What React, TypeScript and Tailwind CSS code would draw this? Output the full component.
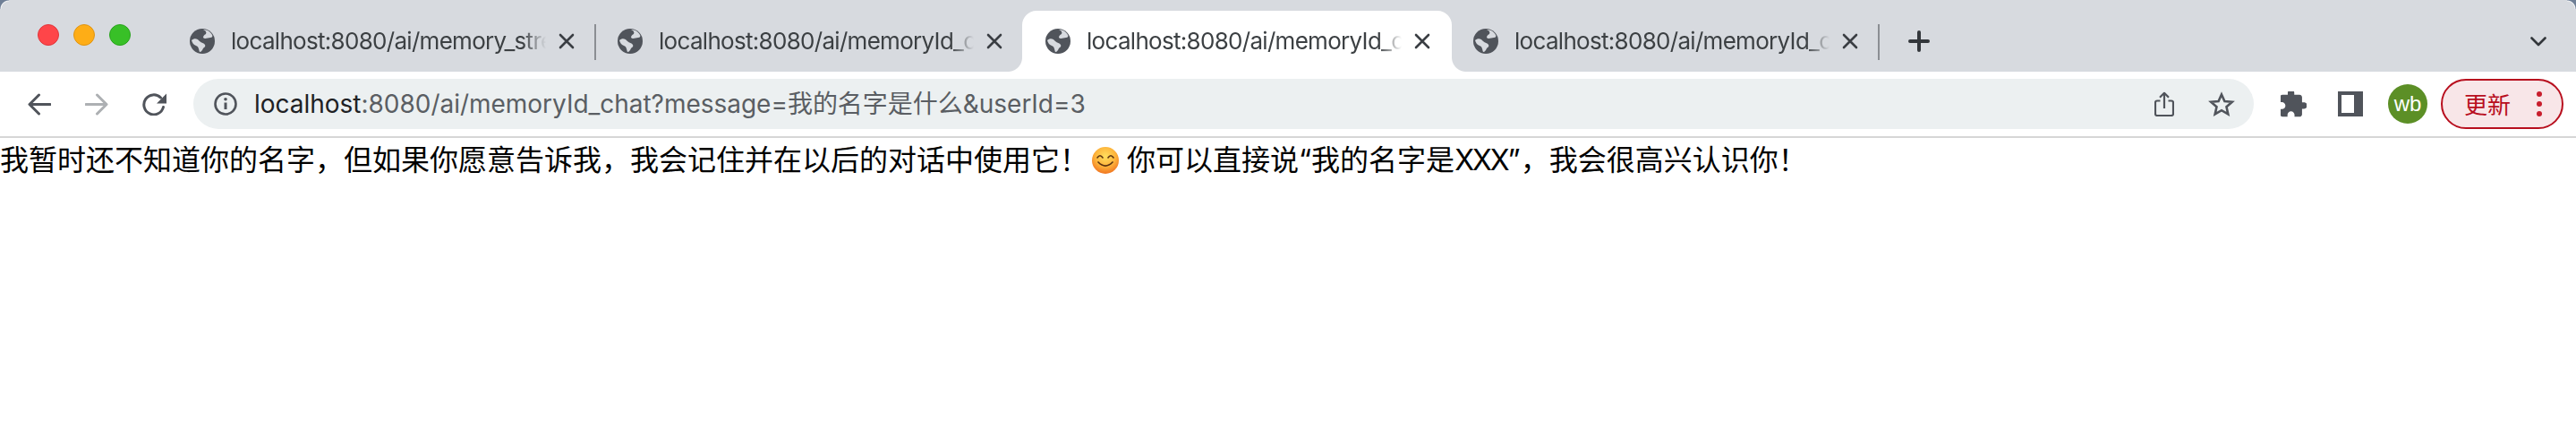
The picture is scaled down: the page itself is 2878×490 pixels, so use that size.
const STRIP = "#d7dadf";

function Globe() {
  return (
    <svg viewBox="0 0 28 28" className="w-[28px] h-[28px] shrink-0">
      <circle cx="14" cy="14" r="14" fill="#50545b" />
      <path
        d="M15 1 C18 2 19 4 18 6 C16 7 15 8 15 10 C17 12 20 10 23 10 C25 10 26 8 25 7 C23 3 19 1 15 1 Z"
        fill={STRIP}
      />
      <path
        d="M2 13 C5 10 9 11 11 14 C13 16 16 16 17 18 C18 20 16 21 15 22 C14 24 13 26 11 26 C10 23 10 20 7 19 C4 18 3 16 2 13 Z"
        fill={STRIP}
      />
    </svg>
  );
}

function Close() {
  return (
    <svg viewBox="0 0 18 18" className="w-[18px] h-[18px] shrink-0">
      <path d="M2 2 L16 16 M16 2 L2 16" stroke="#3a3e43" strokeWidth="2.6" strokeLinecap="round" />
    </svg>
  );
}

function Tab({ title, active, separator }: { title: string; active?: boolean; separator?: boolean }) {
  return (
    <div className={active ? "relative h-[68px] w-[480px] -mr-[2px] flex items-center pl-[26px] bg-white rounded-t-[16px] z-10" : "relative h-[68px] w-[478px] flex items-center pl-[26px]"}>
      {separator && <span className="absolute left-0 top-[15px] w-[2px] h-[40px] bg-[#8b8e93]" />}
      {active && (
        <>
          <span className="absolute left-[-16px] bottom-0 w-[16px] h-[16px] bg-[radial-gradient(circle_at_0_0,#d7dadf_15.5px,#ffffff_16.5px)]" />
          <span className="absolute right-[-16px] bottom-0 w-[16px] h-[16px] bg-[radial-gradient(circle_at_100%_0,#d7dadf_15.5px,#ffffff_16.5px)]" />
        </>
      )}
      <Globe />
      <div className="ml-[18px] w-[352px] overflow-hidden whitespace-nowrap text-[26px] leading-[34px] text-[#3c4043] font-['Inter',sans-serif] tracking-[-0.7px] [mask-image:linear-gradient(to_right,black_326px,transparent_352px)]">
        {title}
      </div>
      <div className="ml-[14px]">
        <Close />
      </div>
    </div>
  );
}

function Emoji() {
  return (
    <svg viewBox="0 0 30 30" className="inline-block w-[30px] h-[30px] align-[-4px] ml-[4px] mr-[9px]">
      <defs>
        <radialGradient id="face" cx="50%" cy="35%" r="70%">
          <stop offset="0%" stopColor="#ffdf5e" />
          <stop offset="55%" stopColor="#fdb23a" />
          <stop offset="100%" stopColor="#ee6a1c" />
        </radialGradient>
      </defs>
      <circle cx="15" cy="15" r="15" fill="url(#face)" />
      <path d="M6 12 Q9 7.5 12 12 M18 12 Q21 7.5 24 12" fill="none" stroke="#5b3210" strokeWidth="1.6" strokeLinecap="round" />
      <path d="M7 17 Q15 25 23 17" fill="none" stroke="#5b3210" strokeWidth="1.7" strokeLinecap="round" />
    </svg>
  );
}

function ToolBtn({ children }: { children: React.ReactNode }) {
  return <div className="w-[64px] h-[56px] flex items-center justify-center shrink-0">{children}</div>;
}

export default function App() {
  return (
    <div className="relative w-full h-[490px] bg-white overflow-hidden font-['Inter','Noto_Sans_CJK_SC',sans-serif]">
      <span className="absolute left-0 top-0 w-[10px] h-[10px] bg-[radial-gradient(circle_at_100%_100%,transparent_8px,#f4f5f6_9px,#6f7f96_10px)]" />
      <span className="absolute right-0 top-0 w-[10px] h-[10px] bg-[radial-gradient(circle_at_0_100%,transparent_8px,#f4f5f6_9px,#6f7f96_10px)]" />

      <div className="h-[80px] bg-[#d7dadf] flex items-end">
        <div className="self-start mt-[27px] ml-[42px] mr-[40px] flex gap-[16px] shrink-0">
          <span className="w-[24px] h-[24px] rounded-full bg-[#fe4549] border border-[#e0363b]" />
          <span className="w-[24px] h-[24px] rounded-full bg-[#fead16] border border-[#df9412]" />
          <span className="w-[24px] h-[24px] rounded-full bg-[#38c027] border border-[#2aa31e]" />
        </div>
        <Tab title="localhost:8080/ai/memory_stream" />
        <Tab title="localhost:8080/ai/memoryId_chat" separator />
        <Tab title="localhost:8080/ai/memoryId_chat" active />
        <Tab title="localhost:8080/ai/memoryId_chat" />
        <div className="relative h-[68px] flex items-center">
          <span className="absolute left-0 top-[15px] w-[2px] h-[40px] bg-[#8b8e93]" />
          <svg viewBox="0 0 24 24" className="ml-[34px] w-[24px] h-[24px]">
            <path d="M12 2 V22 M2 12 H22" stroke="#33373b" strokeWidth="4" strokeLinecap="round" />
          </svg>
        </div>
        <div className="ml-auto mr-[33px] h-[68px] flex items-center">
          <svg viewBox="0 0 18 11" className="w-[18px] h-[11px]">
            <path d="M1.5 1.5 L9 9 L16.5 1.5" fill="none" stroke="#33373b" strokeWidth="2.6" strokeLinecap="round" strokeLinejoin="round" />
          </svg>
        </div>
      </div>

      <div className="h-[74px] border-b-2 border-[#d6d6d6] flex items-center pl-[12px] bg-white">
        <ToolBtn>
          <svg viewBox="0 0 26 25" className="w-[26px] h-[25px]">
            <path d="M25 12.5 H3 M12.5 2 L2 12.5 L12.5 23" fill="none" stroke="#50545b" strokeWidth="3" strokeLinecap="round" strokeLinejoin="round" />
          </svg>
        </ToolBtn>
        <ToolBtn>
          <svg viewBox="0 0 26 25" className="w-[26px] h-[25px]">
            <path d="M1 12.5 H23 M13.5 2 L24 12.5 L13.5 23" fill="none" stroke="#adb0b3" strokeWidth="3" strokeLinecap="round" strokeLinejoin="round" />
          </svg>
        </ToolBtn>
        <ToolBtn>
          <svg viewBox="0 0 27 25" className="w-[27px] h-[25px]">
            <path d="M23.5 15.5 A11 11 0 1 1 20.5 5" fill="none" stroke="#50545b" strokeWidth="3" strokeLinecap="round" />
            <path d="M27 0.5 V11.5 H16 Z" fill="#50545b" />
          </svg>
        </ToolBtn>

        <div className="ml-[12px] flex-1 h-[56px] rounded-full bg-[#ecf0f1] flex items-center pl-[23px] pr-[4px] min-w-0">
          <svg viewBox="0 0 26 26" className="w-[26px] h-[26px] shrink-0">
            <circle cx="13" cy="13" r="11.5" fill="none" stroke="#50545b" strokeWidth="2.6" />
            <path d="M13 11.5 V19" stroke="#50545b" strokeWidth="3" />
            <circle cx="13" cy="7.8" r="1.8" fill="#50545b" />
          </svg>
          <div className="ml-[19px] text-[28px] leading-[36px] whitespace-nowrap text-[#5a5e63] tracking-[-0.02px] font-['Inter','Noto_Sans_CJK_SC',sans-serif]">
            <span className="text-[#202124]">localhost</span>:8080/ai/memoryId_chat?message=我的名字是什么&amp;userId=3
          </div>
          <div className="ml-auto flex">
            <ToolBtn>
              <svg viewBox="0 0 22 28" className="w-[22px] h-[28px]">
                <path d="M6.5 10.5 H3 Q1 10.5 1 12.5 V25 Q1 27 3 27 H19 Q21 27 21 25 V12.5 Q21 10.5 19 10.5 H15.5" fill="none" stroke="#50545b" strokeWidth="2.2" />
                <path d="M11 19 V2 M6 6.8 L11 1.8 L16 6.8" fill="none" stroke="#50545b" strokeWidth="2.2" strokeLinejoin="round" />
              </svg>
            </ToolBtn>
            <ToolBtn>
              <svg viewBox="0 0 30 28" className="w-[30px] h-[28px]">
                <path d="M15 3.5 L18.4 11 L26.8 11.8 L20.5 17.3 L22.3 25.4 L15 21.2 L7.7 25.4 L9.5 17.3 L3.2 11.8 L11.6 11 Z" fill="none" stroke="#50545b" strokeWidth="2.6" strokeLinejoin="miter" />
              </svg>
            </ToolBtn>
          </div>
        </div>

        <div className="ml-[12px] flex items-center shrink-0">
          <ToolBtn>
            <svg viewBox="2 2 20 20" className="w-[29px] h-[29px]">
              <path d="M20.5 11H19V7c0-1.1-.9-2-2-2h-4V3.5C13 2.12 11.88 1 10.5 1S8 2.12 8 3.5V5H4c-1.1 0-1.99.9-1.99 2v3.8H3.5c1.49 0 2.7 1.21 2.7 2.7s-1.21 2.7-2.7 2.7H2V20c0 1.1.9 2 2 2h3.8v-1.5c0-1.49 1.21-2.7 2.7-2.7 1.49 0 2.7 1.21 2.7 2.7V22H17c1.1 0 2-.9 2-2v-4h1.5c1.38 0 2.5-1.12 2.5-2.5S21.88 11 20.5 11z" fill="#50545b" transform="translate(-0.5 -0.5)" />
            </svg>
          </ToolBtn>
          <ToolBtn>
            <svg viewBox="0 0 28 28" className="w-[28px] h-[28px]">
              <path fillRule="evenodd" d="M0 0 H28 V28 H0 Z M4 4 V24 H18 V4 Z" fill="#50545b" />
            </svg>
          </ToolBtn>
          <ToolBtn>
            <div className="w-[44px] h-[44px] rounded-full bg-[#5c8f26] flex items-center justify-center text-white text-[24px] leading-none font-['Liberation_Sans',sans-serif]">
              wb
            </div>
          </ToolBtn>
          <div className="ml-[5px] mr-[14px] w-[137px] h-[56px] rounded-full border-2 border-[#b80f1e] bg-[#f8e6e8] flex items-center pl-[24px] shrink-0">
            <span className="text-[26px] leading-none text-[#b80f1e] font-['Noto_Sans_CJK_SC',sans-serif]">更新</span>
            <svg viewBox="0 0 6 28" className="ml-[29px] w-[6px] h-[28px]">
              <circle cx="3" cy="3" r="3" fill="#c81e2c" />
              <circle cx="3" cy="14" r="3" fill="#c81e2c" />
              <circle cx="3" cy="25" r="3" fill="#c81e2c" />
            </svg>
          </div>
        </div>
      </div>

      <div className="text-[32px] leading-[50px] text-black whitespace-nowrap font-['Inter','Noto_Sans_CJK_SC',sans-serif]">
        我暂时还不知道你的名字，但如果你愿意告诉我，我会记住并在以后的对话中使用它！<Emoji />你可以直接说“我的名字是<span className="tracking-[-2px]">XXX</span>”，我会很高兴认识你！
      </div>
    </div>
  );
}
